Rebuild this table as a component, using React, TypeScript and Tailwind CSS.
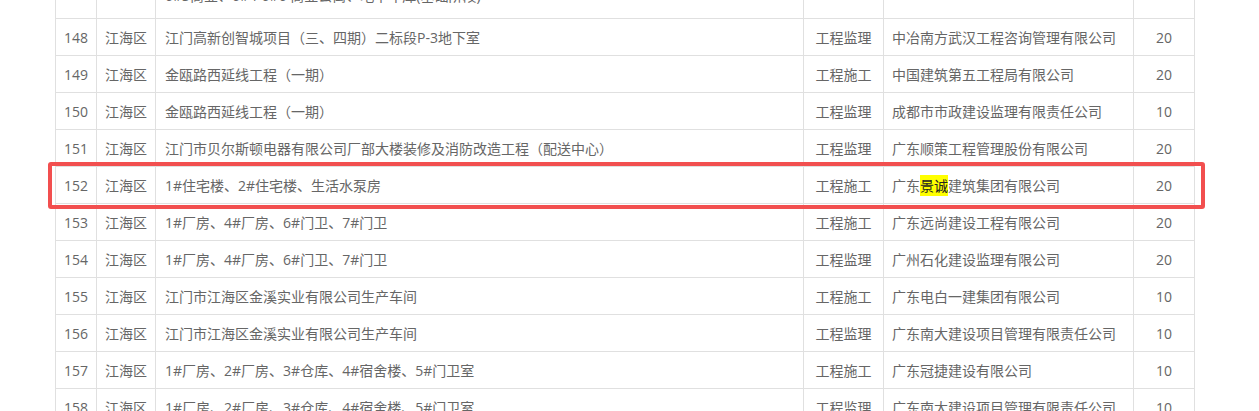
import React from "react";

type Row = {
  no: string;
  area: string;
  project: string;
  kind: string;
  company: React.ReactNode;
  score: string;
};

const rows: Row[] = [
  { no: "148", area: "江海区", project: "江门高新创智城项目（三、四期）二标段P-3地下室", kind: "工程监理", company: "中冶南方武汉工程咨询管理有限公司", score: "20" },
  { no: "149", area: "江海区", project: "金瓯路西延线工程（一期）", kind: "工程施工", company: "中国建筑第五工程局有限公司", score: "20" },
  { no: "150", area: "江海区", project: "金瓯路西延线工程（一期）", kind: "工程监理", company: "成都市市政建设监理有限责任公司", score: "10" },
  { no: "151", area: "江海区", project: "江门市贝尔斯顿电器有限公司厂部大楼装修及消防改造工程（配送中心）", kind: "工程监理", company: "广东顺策工程管理股份有限公司", score: "20" },
  {
    no: "152",
    area: "江海区",
    project: "1#住宅楼、2#住宅楼、生活水泵房",
    kind: "工程施工",
    company: (
      <>
        广东<span className="bg-[#ffff00] py-[1px] text-[#222]">景诚</span>建筑集团有限公司
      </>
    ),
    score: "20",
  },
  { no: "153", area: "江海区", project: "1#厂房、4#厂房、6#门卫、7#门卫", kind: "工程施工", company: "广东远尚建设工程有限公司", score: "20" },
  { no: "154", area: "江海区", project: "1#厂房、4#厂房、6#门卫、7#门卫", kind: "工程监理", company: "广州石化建设监理有限公司", score: "20" },
  { no: "155", area: "江海区", project: "江门市江海区金溪实业有限公司生产车间", kind: "工程施工", company: "广东电白一建集团有限公司", score: "10" },
  { no: "156", area: "江海区", project: "江门市江海区金溪实业有限公司生产车间", kind: "工程监理", company: "广东南大建设项目管理有限责任公司", score: "10" },
  { no: "157", area: "江海区", project: "1#厂房、2#厂房、3#仓库、4#宿舍楼、5#门卫室", kind: "工程施工", company: "广东冠捷建设有限公司", score: "10" },
  { no: "158", area: "江海区", project: "1#厂房、2#厂房、3#仓库、4#宿舍楼、5#门卫室", kind: "工程监理", company: "广东南大建设项目管理有限责任公司", score: "10" },
];

const td = "border border-[#e0e0e0] h-[37px] p-0";

export default function App() {
  return (
    <div className="relative h-[411px] w-[1259px] overflow-hidden bg-white font-[Open_Sans,Noto_Sans_CJK_SC,sans-serif] text-[14px] text-[#666]">
      <table className="ml-[55px] mt-[-19px] w-[1139px] table-fixed border-collapse">
        <colgroup>
          <col className="w-[41px]" />
          <col className="w-[59px]" />
          <col className="w-[648px]" />
          <col className="w-[80px]" />
          <col className="w-[250px]" />
          <col className="w-[61px]" />
        </colgroup>
        <tbody>
          <tr>
            <td className={td}></td>
            <td className={td}></td>
            <td className={td + " pl-[9px] align-bottom"}>
              <div className="pb-[12px] leading-[20px]">6#3商业、6#4-6#6 商业公寓、地下车库(基础阶段)</div>
            </td>
            <td className={td}></td>
            <td className={td}></td>
            <td className={td}></td>
          </tr>
          {rows.map((r) => (
            <tr key={r.no}>
              <td className={td + " text-center"}>{r.no}</td>
              <td className={td + " text-center"}>{r.area}</td>
              <td className={td + " pl-[9px] whitespace-nowrap"}>{r.project}</td>
              <td className={td + " text-center"}>{r.kind}</td>
              <td className={td + " pl-[8px] whitespace-nowrap"}>{r.company}</td>
              <td className={td + " text-center"}>{r.score}</td>
            </tr>
          ))}
        </tbody>
      </table>
      {/* highlight box over row 152 */}
      <div className="pointer-events-none absolute left-[48px] top-[162px] h-[47px] w-[1157px] rounded-[3px] border-[4px] border-[#f24f4f]" />
    </div>
  );
}
